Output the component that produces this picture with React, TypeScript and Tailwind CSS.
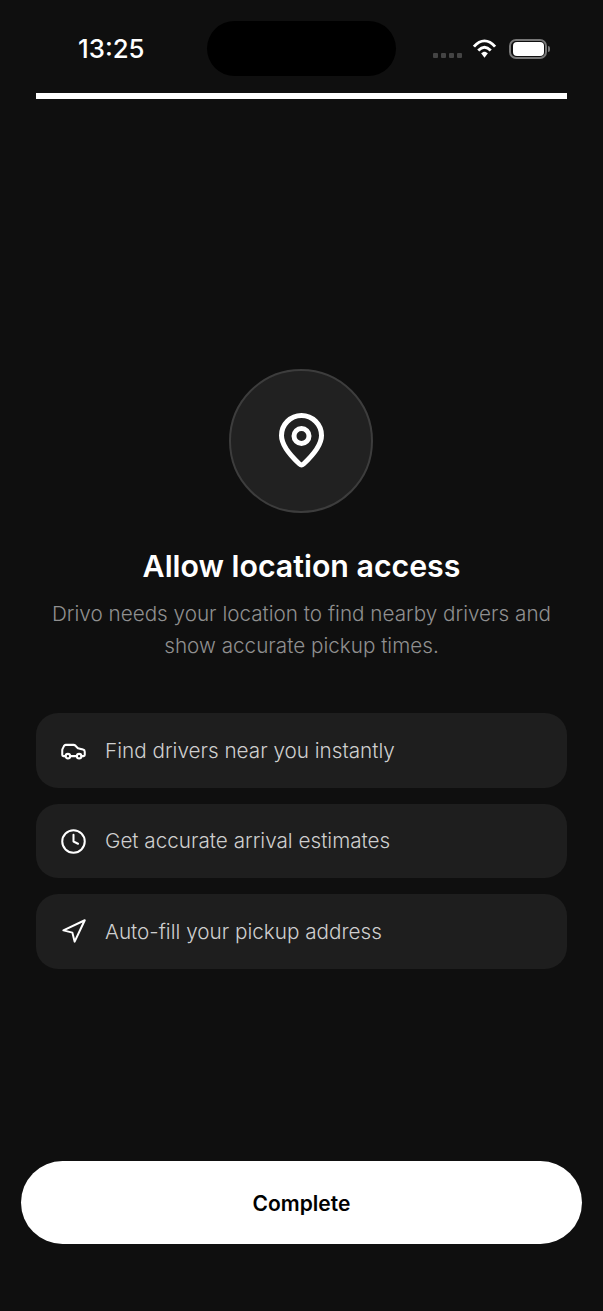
import { Car, Clock, Navigation } from "lucide-react";

const perks = [
  { icon: Car, label: "Find drivers near you instantly" },
  { icon: Clock, label: "Get accurate arrival estimates" },
  { icon: Navigation, label: "Auto-fill your pickup address" },
];

function StatusBar() {
  return (
    <div className="flex h-[93px] items-start pl-[78px] pr-[53px] pt-[21px]">
      <span className="mt-[13px] text-[25.8px] leading-[30px] font-medium text-white">13:25</span>
      <div className="ml-[62px] h-[55px] w-[189px] rounded-full bg-black" />
      <div className="mt-[18px] ml-auto flex items-center">
        <div className="mt-[13px] mr-[10px] flex gap-[3px]">
          <span className="h-[5px] w-[5px] rounded-[1px] bg-[#444444]" />
          <span className="h-[5px] w-[5px] rounded-[1px] bg-[#444444]" />
          <span className="h-[5px] w-[5px] rounded-[1px] bg-[#444444]" />
          <span className="h-[5px] w-[5px] rounded-[1px] bg-[#444444]" />
        </div>
        <svg width="25" height="20" viewBox="0 0 26 20" fill="none" className="mr-[12px]">
          <path d="M2 7.500C9-.5 17-.5 24 7.500" stroke="white" strokeWidth="3" />
          <path d="M6.500 11.500c4.500-4.500 8.500-4.500 13 0" stroke="white" strokeWidth="3" />
          <path d="M9.500 14.500c2.500-2.300 4.500-2.300 7 0L13 19z" fill="white" />
        </svg>
        <div className="relative mr-[3px] flex h-[20px] w-[38px] items-center justify-center rounded-[7px] border-2 border-[#777777]">
          <span className="h-[14px] w-[31px] rounded-[4px] bg-white" />
          <span className="absolute -right-[5px] h-[6px] w-[2px] rounded-r-full bg-[#777777]" />
        </div>
      </div>
    </div>
  );
}

export default function App() {
  return (
    <div className="flex h-[1311px] flex-col bg-[#0f0f0f] font-['Inter',sans-serif]">
      <StatusBar />
      <div className="mx-[36px] h-[6px] bg-white" />

      <div className="mt-[270px] flex flex-col items-center px-[36px]">
        <div className="mr-[1px] grid h-[144px] w-[144px] place-items-center rounded-full border-2 border-[#3d3d3d] bg-[#212121]">
          <svg width="45" height="56" viewBox="0 0 45 56" fill="none" stroke="white" strokeWidth="5" strokeLinejoin="round" className="ml-[1px]">
            <path d="M42.500 22.500c0 11-11 22-18 28.500a3 3 0 0 1-4 0C13.500 44.500 2.500 33.500 2.500 22.500a20 20 0 0 1 40 0Z" />
            <circle cx="22.500" cy="23" r="7.500" />
          </svg>
        </div>
        <h1 className="mt-[35px] text-[30.3px] leading-[36px] font-semibold text-white">Allow location access</h1>
        <p className="mt-[14px] text-center text-[20.7px] leading-[32px] font-[350] text-[#909090]">
          Drivo needs your location to find nearby drivers and
          <br />
          show accurate pickup times.
        </p>

        <div className="mt-[51.4px] flex w-full flex-col gap-[16px]">
          {perks.map((perk) => (
            <div key={perk.label} className="flex h-[74.5px] items-center gap-[18px] rounded-[22px] bg-[#1e1e1e] pl-[24px]">
              <perk.icon size={27} strokeWidth={1.8} className="text-white" />
              <span className="text-[20.7px] leading-[32px] font-[350] text-[#cfcfcf]">{perk.label}</span>
            </div>
          ))}
        </div>
      </div>

      <div className="mt-auto px-[21px] pb-[67px]">
        <button className="h-[83.500px] w-full rounded-full bg-white pt-[2px] text-[21px] font-semibold text-black">Complete</button>
      </div>
    </div>
  );
}
